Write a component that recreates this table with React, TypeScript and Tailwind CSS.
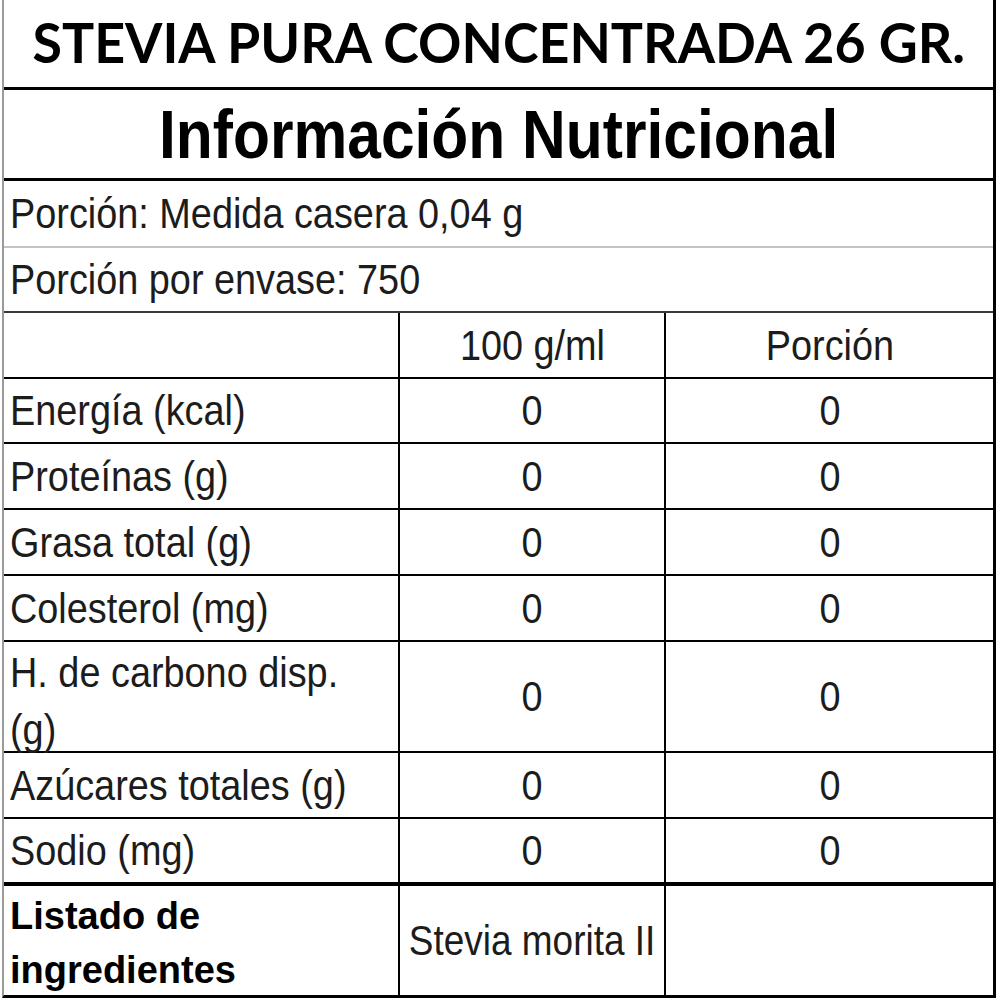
const ROWS: { label: React.ReactNode; a: string; b: string; h: string; tall?: boolean }[] = [
  { label: "Energía (kcal)", a: "0", b: "0", h: "h-[65px]" },
  { label: "Proteínas (g)", a: "0", b: "0", h: "h-[66px]" },
  { label: "Grasa total (g)", a: "0", b: "0", h: "h-[66px]" },
  { label: "Colesterol (mg)", a: "0", b: "0", h: "h-[66px]" },
  {
    label: (
      <>
        H. de carbono disp.
        <br />
        (g)
      </>
    ),
    a: "0",
    b: "0",
    h: "h-[111px]",
    tall: true,
  },
  { label: "Azúcares totales (g)", a: "0", b: "0", h: "h-[66px]" },
];

function Txt({ children, left }: { children: React.ReactNode; left?: boolean }) {
  return (
    <span
      className={`inline-block whitespace-nowrap scale-x-[0.88] ${left ? "origin-left" : "origin-center"}`}
    >
      {children}
    </span>
  );
}

function Row({
  label,
  a,
  b,
  h,
  border = "border-b-2 border-black",
  tall,
}: {
  label: React.ReactNode;
  a: React.ReactNode;
  b: React.ReactNode;
  h: string;
  border?: string;
  tall?: boolean;
}) {
  return (
    <div className={`flex ${h} ${border}`}>
      <div className="w-[396px] border-r-2 border-black flex items-center pl-[6px]">
        <span className={tall ? "leading-[57px] pt-[8px]" : ""}>
          <Txt left>{label}</Txt>
        </span>
      </div>
      <div className="w-[266px] border-r-2 border-black flex items-center justify-center">
        <Txt>{a}</Txt>
      </div>
      <div className="flex-1 flex items-center justify-center">
        <Txt>{b}</Txt>
      </div>
    </div>
  );
}

export default function App() {
  return (
    <div className="w-[1000px] h-[1000px] bg-white overflow-hidden">
      <div
        className="ml-[2px] w-[994px] border-l-2 border-l-[#9a9a9a] border-r-[3px] border-r-black border-b-[3px] border-b-black text-[43px] text-[#1c1c1c] leading-none"
        style={{ fontFamily: '"Liberation Sans", Arial, sans-serif' }}
      >
        {/* Title */}
        <div className="h-[90px] border-b-[3px] border-black flex items-center justify-center">
          <span
            className="inline-block whitespace-nowrap scale-x-[0.96] text-[56px] font-bold text-black pb-[4px]"
            style={{ fontFamily: 'Lato, "Open Sans", sans-serif' }}
          >
            STEVIA PURA CONCENTRADA 26 GR.
          </span>
        </div>

        {/* Información Nutricional */}
        <div className="h-[91px] border-b-[3px] border-black flex items-center justify-center">
          <span className="inline-block whitespace-nowrap scale-x-[0.89] text-[68px] font-bold text-black">
            Información Nutricional
          </span>
        </div>

        <div className="h-[67px] border-b-2 border-[#c4c4c4] flex items-center pl-[6px]">
          <Txt left>Porción: Medida casera 0,04 g</Txt>
        </div>
        <div className="h-[65px] border-b-2 border-[#3a3a3a] flex items-center pl-[6px]">
          <Txt left>Porción por envase: 750</Txt>
        </div>

        <Row label="" a="100 g/ml" b="Porción" h="h-[66px]" />
        {ROWS.map((r, i) => (
          <Row key={i} label={r.label} a={r.a} b={r.b} h={r.h} tall={r.tall} />
        ))}
        <Row label="Sodio (mg)" a="0" b="0" h="h-[67px]" border="border-b-4 border-black" />

        {/* Ingredientes */}
        <div className="flex h-[109px]">
          <div className="w-[396px] border-r-2 border-black flex items-center pl-[6px]">
            <span className="text-[38px] font-bold text-black leading-[54px] pt-[4px]">
              Listado de
              <br />
              ingredientes
            </span>
          </div>
          <div className="w-[266px] border-r-2 border-black flex items-center justify-center">
            <span className="text-[42px]">
              <Txt>Stevia morita II</Txt>
            </span>
          </div>
          <div className="flex-1" />
        </div>
      </div>
    </div>
  );
}
